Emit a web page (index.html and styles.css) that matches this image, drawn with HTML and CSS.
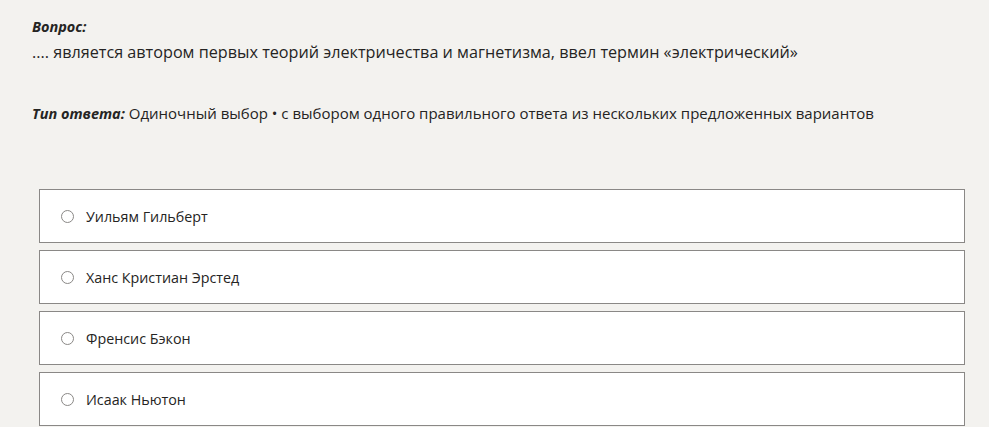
FILE: index.html
```html
<!DOCTYPE html>
<html>
<head>
	<meta charset="utf-8">
	<title>Вопрос</title>
<link rel="stylesheet" href="styles.css">
</head>
<body>
<div class="quiz">
	<div class="question">
		<div class="label">Вопрос:</div>
		<div class="text">.... является автором первых теорий электричества и магнетизма, ввел термин «электрический»</div>
	</div>
	<div class="type"><span class="label">Тип ответа:</span> Одиночный выбор • с выбором одного правильного ответа из нескольких предложенных вариантов</div>

	<!-- варианты ответа -->
	<ul class="options">
		<li><label class="option"><span class="radio"></span>Уильям Гильберт</label></li>
		<li><label class="option"><span class="radio"></span>Ханс Кристиан Эрстед</label></li>
		<li><label class="option"><span class="radio"></span>Френсис Бэкон</label></li>
		<li><label class="option"><span class="radio"></span>Исаак Ньютон</label></li>
	</ul>
</div>
</body>
</html>
```

FILE: styles.css
```css
*{margin: 0;padding: 0;box-sizing: border-box;}
ul{list-style: none;}
body{
	background: #f3f2ef;
	color: #252423;
	font-family: "Open Sans", "Noto Sans", sans-serif;
	font-size: 14px;
}
.quiz{padding: 16px 24px 0 32px;}
.label{font-weight: bold;font-style: italic;font-size: 14.5px;}
.question .label{line-height: 22px;}
.question .text{font-size: 16.2px;line-height: 28px;}
.type{margin-top: 36px;font-size: 15px;line-height: 22px;}
.options{margin-top: 64px;padding-left: 7px;display: flex;flex-direction: column;gap: 7px;}
.option{
	display: flex;
	align-items: center;
	height: 54px;
	padding-left: 21px;
	background: #fff;
	border: 1px solid #8a8886;
	font-size: 14.3px;
	cursor: pointer;
}
.radio{
	width: 13px;
	height: 13px;
	border: 1px solid #8a8886;
	border-radius: 50%;
	margin-right: 12px;
	flex: none;
}
```
